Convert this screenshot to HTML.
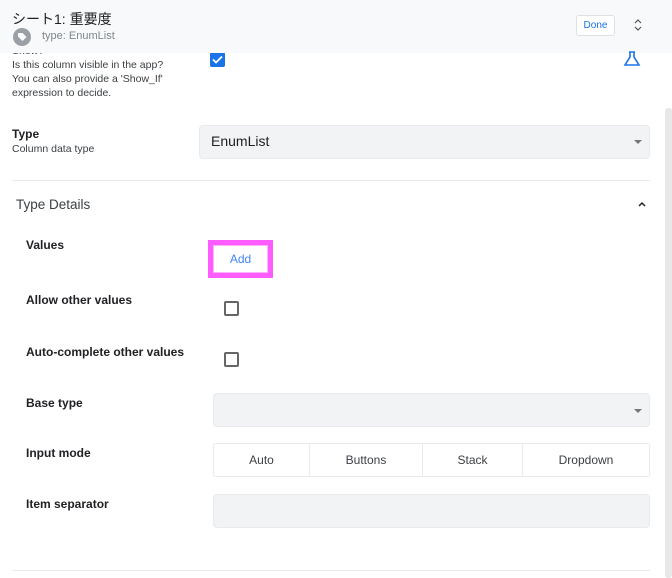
<!DOCTYPE html>
<html><head><meta charset="utf-8"><style>
*{box-sizing:border-box;margin:0;padding:0}
body{width:672px;height:578px;overflow:hidden;background:#fff;font-family:"Liberation Sans","Noto Sans CJK JP",sans-serif;color:#202124;position:relative}
.a{position:absolute}
.lbl{font-size:12px;font-weight:bold;color:#202124}
.sub{font-size:10.5px;color:#3c4043;line-height:14px}
.box{background:#f1f3f4;border:1px solid #e8eaed;border-radius:4px}
.cb{width:15px;height:15px;border:2px solid #666;border-radius:2px}
.arrow{width:0;height:0;border-left:4px solid transparent;border-right:4px solid transparent;border-top:4px solid #777}
</style></head><body>
<div class="a sub" style="left:12px;top:44px;width:200px">Show?<br>Is this column visible in the app?<br>You can also provide a 'Show_If'<br>expression to decide.</div>
<div class="a" style="left:210px;top:52px;width:15px;height:15px;background:#1a73e8;border-radius:2px"><svg width="15" height="15"><path d="M3 7.5l3 3 6-6" stroke="#fff" stroke-width="1.8" fill="none"/></svg></div>
<div class="a" style="left:0;top:0;width:672px;height:53px;background:#f8f9fa"></div>
<svg class="a" style="left:623px;top:51px" width="18" height="16"><path d="M6 1h6M7 1v5L2 14h14L11 6V1" stroke="#1a73e8" stroke-width="1.6" fill="none"/></svg>
<div class="a" style="left:12px;top:9px;font-size:14px">シート1: 重要度</div>
<div class="a" style="left:13px;top:28px;width:18px;height:18px;border-radius:50%;background:#9aa0a6"><svg width="18" height="18"><path d="M5 5h4.5l4 4-4 4-4.5-4.5z" fill="#fff"/></svg></div>
<div class="a" style="left:42px;top:30px;font-size:11px;color:#80868b">type: EnumList</div>
<div class="a" style="left:576px;top:15px;width:39px;height:21px;border:1px solid #e0e0e0;border-radius:3px;background:#fff;font-size:10px;color:#1a73e8;text-align:center;line-height:19px">Done</div>
<svg class="a" style="left:633px;top:18px" width="10" height="14"><path d="M2 5l3-3 3 3M2 9l3 3 3-3" stroke="#555" stroke-width="1.2" fill="none"/></svg>
<div class="a" style="left:665px;top:108px;width:7px;height:470px;background:#e8e8e8;border-radius:3px"></div>
<div class="a lbl" style="left:12px;top:127px">Type</div>
<div class="a sub" style="left:12px;top:142px">Column data type</div>
<div class="a box" style="left:199px;top:125px;width:451px;height:34px"></div>
<div class="a" style="left:211px;top:133px;font-size:14px">EnumList</div>
<div class="a arrow" style="left:634px;top:140px"></div>
<div class="a" style="left:12px;top:180px;width:638px;height:1px;background:#e8eaed"></div>
<div class="a" style="left:16px;top:197px;font-size:13.5px;color:#3c4043">Type Details</div>
<svg class="a" style="left:637px;top:199px" width="10" height="10"><path d="M2 7l3-3 3 3" stroke="#222" stroke-width="1.5" fill="none"/></svg>
<div class="a lbl" style="left:26px;top:238px">Values</div>
<div class="a" style="left:208px;top:240px;width:65px;height:38px;border:5px solid #ff5cff;background:#fff"><div style="position:absolute;inset:0;border:1px solid #ffb0ff;font-size:12px;color:#4285f4;text-align:center;line-height:26px">Add</div></div>
<div class="a lbl" style="left:26px;top:293px">Allow other values</div>
<div class="a cb" style="left:224px;top:301px"></div>
<div class="a lbl" style="left:26px;top:345px">Auto-complete other values</div>
<div class="a cb" style="left:224px;top:352px"></div>
<div class="a lbl" style="left:26px;top:396px">Base type</div>
<div class="a box" style="left:213px;top:393px;width:437px;height:34px"></div>
<div class="a arrow" style="left:634px;top:409px"></div>
<div class="a lbl" style="left:26px;top:446px">Input mode</div>
<div class="a" style="left:213px;top:443px;width:437px;height:34px;border:1px solid #e8eaed;border-radius:3px;display:flex;font-size:12px;color:#3c4043">
<div style="width:96px;text-align:center;line-height:32px;border-right:1px solid #e8eaed">Auto</div>
<div style="width:113px;text-align:center;line-height:32px;border-right:1px solid #e8eaed">Buttons</div>
<div style="width:100px;text-align:center;line-height:32px;border-right:1px solid #e8eaed">Stack</div>
<div style="flex:1;text-align:center;line-height:32px">Dropdown</div></div>
<div class="a lbl" style="left:26px;top:497px">Item separator</div>
<div class="a box" style="left:213px;top:494px;width:437px;height:34px"></div>
<div class="a" style="left:12px;top:570px;width:638px;height:1px;background:#e8eaed"></div>
</body></html>
